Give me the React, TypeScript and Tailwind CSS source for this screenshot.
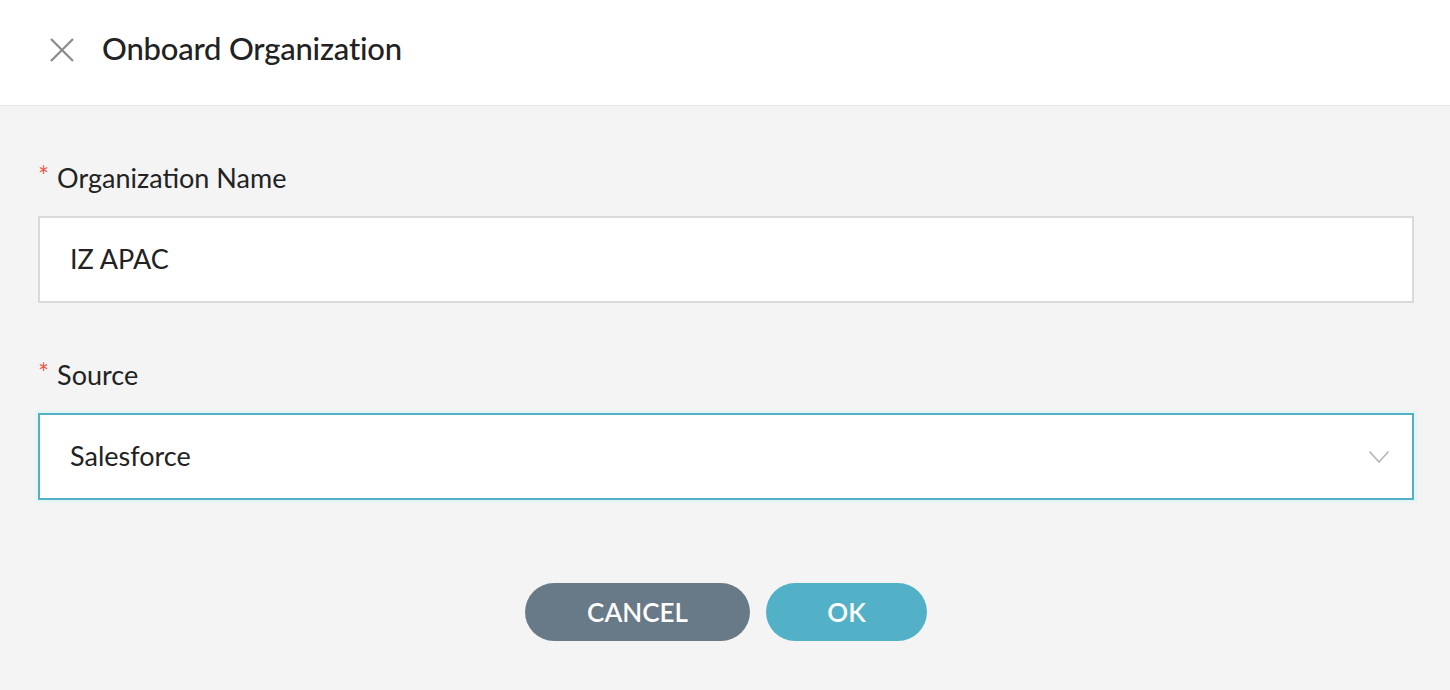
export default function App() {
  return (
    <div className="w-[1450px] h-[690px] bg-[#f4f4f4] flex flex-col" style={{ fontFamily: "Lato, 'Open Sans', sans-serif" }}>
      <div className="h-[106px] bg-white border-b border-[#e6e6e6] flex items-center pl-[48px] pb-[8px] shrink-0">
        <svg width="28" height="28" viewBox="0 0 28 28" className="mr-[26px] mt-[2px]">
          <path d="M3 3 L25 25 M25 3 L3 25" stroke="#8a8a8a" strokeWidth="2.2" fill="none" />
        </svg>
        <h1 className="text-[31px] font-medium text-[#222] tracking-[-0.2px]">Onboard Organization</h1>
      </div>
      <div className="pl-[38px] pr-[36px] pt-[58px]">
        <label className="flex items-center text-[27px] text-[#222] leading-none">
          <span className="text-[#e55a4f] text-[26px] mr-[8px] -mt-[4px]">*</span>
          Organization Name
        </label>
        <div className="mt-[25px] h-[87px] bg-white border-2 border-[#dadada] flex items-center px-[30px] text-[27px] text-[#222]">
          IZ APAC
        </div>
        <label className="flex items-center text-[27px] text-[#222] leading-none mt-[58px]">
          <span className="text-[#e55a4f] text-[26px] mr-[8px] -mt-[4px]">*</span>
          Source
        </label>
        <div className="mt-[25px] h-[87px] bg-white border-2 border-[#52b1c6] ring-[3px] ring-[#e6f4f4] flex items-center justify-between pl-[30px] pr-[22px] text-[27px] text-[#222]">
          <span>Salesforce</span>
          <svg width="22" height="14" viewBox="0 0 22 14">
            <path d="M1.5 1.5 L11 12 L20.5 1.5" stroke="#b8b8b8" strokeWidth="1.8" fill="none" />
          </svg>
        </div>
        <div className="flex justify-center gap-[16px] mt-[83px]">
          <button className="w-[225px] h-[58px] rounded-full bg-[#687a88] text-white text-[26px] font-semibold">CANCEL</button>
          <button className="w-[161px] h-[58px] rounded-full bg-[#52b1c6] text-white text-[26px] font-semibold">OK</button>
        </div>
      </div>
    </div>
  );
}
